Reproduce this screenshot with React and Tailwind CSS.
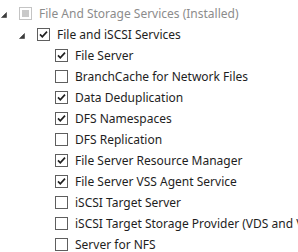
import React from 'react';

// ── Tree data ────────────────────────────────────────────────────────────────
const rows = [
  { level: 0, label: 'File And Storage Services (Installed)', state: 'disabled', expander: true },
  { level: 1, label: 'File and iSCSI Services', state: 'checked', expander: true },
  { level: 2, label: 'File Server', state: 'checked' },
  { level: 2, label: 'BranchCache for Network Files', state: 'empty' },
  { level: 2, label: 'Data Deduplication', state: 'checked' },
  { level: 2, label: 'DFS Namespaces', state: 'checked' },
  { level: 2, label: 'DFS Replication', state: 'empty' },
  { level: 2, label: 'File Server Resource Manager', state: 'checked' },
  { level: 2, label: 'File Server VSS Agent Service', state: 'checked' },
  { level: 2, label: 'iSCSI Target Server', state: 'empty' },
  { level: 2, label: 'iSCSI Target Storage Provider (VDS and VSS hardware providers)', state: 'empty' },
  { level: 2, label: 'Server for NFS', state: 'empty' },
];

const indent = ['pl-[1px]', 'pl-[19px]', 'pl-[37px]'];

function Expander() {
  return (
    <svg width="6" height="6" viewBox="0 0 6 6" className="mt-[3px]">
      <path d="M5.5 0.5 L5.5 5.5 L0.5 5.5 Z" fill="#3c3c3c" stroke="#3c3c3c" strokeWidth="0.6" />
    </svg>
  );
}

function Checkbox({ state }) {
  if (state === 'disabled') {
    return (
      <div className="w-[13px] h-[13px] border border-[#c4c4c4] bg-white flex items-center justify-center shrink-0">
        <div className="w-[7px] h-[7px] bg-[#c9c9c9]" />
      </div>
    );
  }
  return (
    <div className="w-[13px] h-[13px] border border-[#5e5e5e] bg-white flex items-center justify-center shrink-0">
      {state === 'checked' && (
        <svg width="11" height="11" viewBox="0 0 11 11">
          <path d="M2 5.4 L4.3 7.8 L9 2.6" fill="none" stroke="#202020" strokeWidth="1.7" />
        </svg>
      )}
    </div>
  );
}

export default function App() {
  return (
    <div
      className="w-[298px] h-[252px] bg-white overflow-hidden pt-[3px] text-[12px] whitespace-nowrap"
      style={{ fontFamily: '"Noto Sans", "Open Sans", sans-serif' }}
    >
      {rows.map((r, i) => (
        <div key={i} className={`flex items-center h-[21px] ${indent[r.level]}`}>
          <div className="w-[18px] shrink-0 flex items-center">
            {r.expander && <Expander />}
          </div>
          <Checkbox state={r.state} />
          <span className={`ml-[7px] ${r.state === 'disabled' ? 'text-[#8c8c8c]' : 'text-[#1e1e1e]'}`}>
            {r.label}
          </span>
        </div>
      ))}
    </div>
  );
}
